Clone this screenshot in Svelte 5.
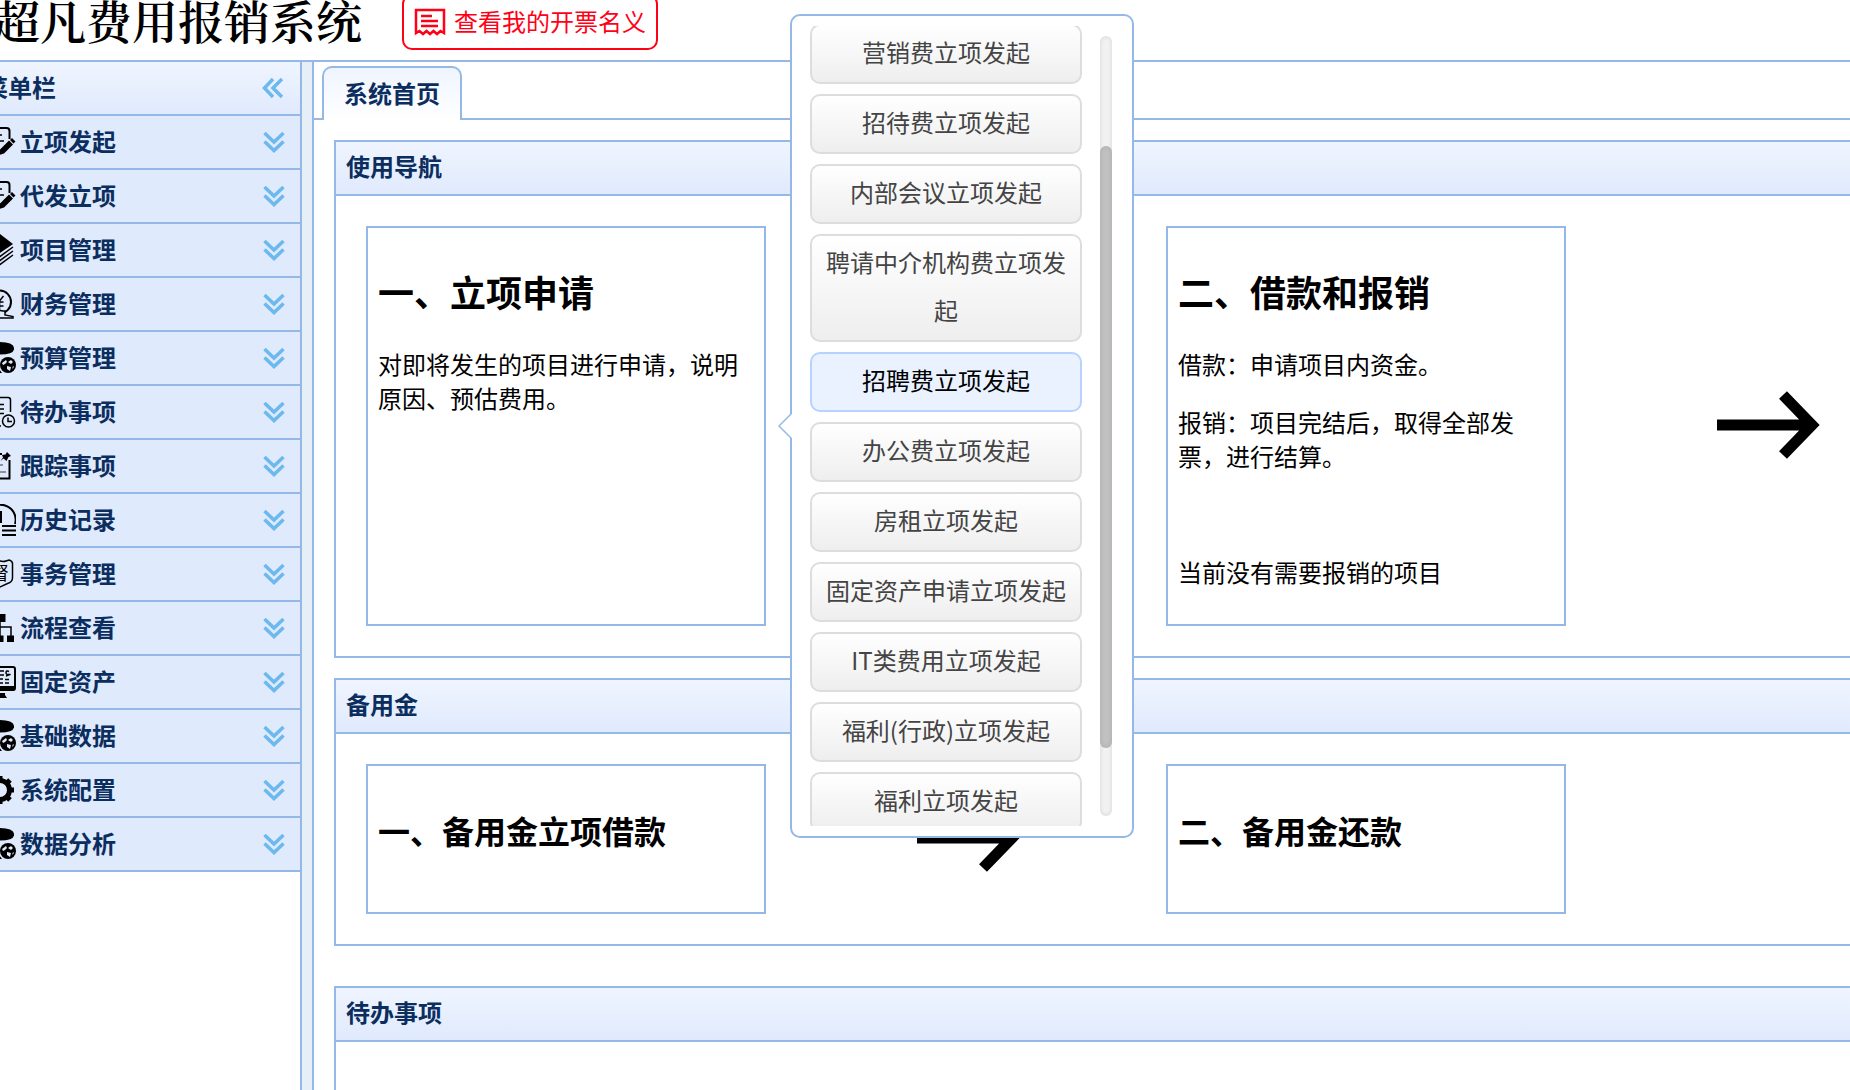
<script>
  const menu = [
    { label: '立项发起', icon: 'edit' },
    { label: '代发立项', icon: 'edit' },
    { label: '项目管理', icon: 'layers' },
    { label: '财务管理', icon: 'finance' },
    { label: '预算管理', icon: 'data' },
    { label: '待办事项', icon: 'todo' },
    { label: '跟踪事项', icon: 'track' },
    { label: '历史记录', icon: 'history' },
    { label: '事务管理', icon: 'shield' },
    { label: '流程查看', icon: 'flow' },
    { label: '固定资产', icon: 'asset' },
    { label: '基础数据', icon: 'data' },
    { label: '系统配置', icon: 'gear' },
    { label: '数据分析', icon: 'data' }
  ];

  const options = [
    '营销费立项发起',
    '招待费立项发起',
    '内部会议立项发起',
    '聘请中介机构费立项发起',
    '招聘费立项发起',
    '办公费立项发起',
    '房租立项发起',
    '固定资产申请立项发起',
    'IT类费用立项发起',
    '福利(行政)立项发起',
    '福利立项发起'
  ];

  let selected = $state('招聘费立项发起');
</script>

{#snippet menuIcon(name)}
  <svg class="menu-icon" viewBox="0 0 32 32" aria-hidden="true">
    {#if name === 'edit'}
      <path d="M25.500 13V5q0-3-3-3H5Q2 2 2 5v22q0 3 3 3h10" class="line" />
      <path d="M8 9h10M8 15h12M8 21h7" class="line thin" />
      <path d="M28 12l3.500 3.500-2 2-3.500-3.500zM25 14.500l4 4L20 27.500l-5 1.500 1-5.500z" />
    {:else if name === 'layers'}
      <path d="M16 0l13 10-13 9-13-9z" />
      <path d="M3 13l13 9.500 13-9.500M3 17l13 9.500 13-9.500M3 21l13 9.500 13-9.500" class="line thin" />
    {:else if name === 'finance'}
      <circle cx="15.500" cy="14" r="11.500" class="line" />
      <path d="M11.500 8l4 5 4-5M15.500 13v9M11.500 14h8M11.500 18h8" class="line thin" />
      <path d="M14 22l5 1 2 0v4l8 1.500V30H14z" class="patch" />
    {:else if name === 'data'}
      <path d="M1 5q1-5 14.500-5T30 5.500v2Q29 12.500 15.500 12.500T1 7.500z" />
      <path d="M1 12q5 4 13 4-2 4 0 8-8 0-13-4zM1 23q5 4 14 4l3 4Q4 31 1 27z" />
      <circle cx="24" cy="23" r="8" />
      <path d="M18 21l4-3 1 2-2 2-2 1zM24 20l3-2 2 2-2 2zM23 24l4 1-1 4-3-2zM29 24l1 1-2 2z" class="cut" />
    {:else if name === 'todo'}
      <path d="M26.500 16V4q0-2.500-2.500-2.500H6Q3.500 1.500 3.500 4v24q0 2 2 2H17" class="line thin" />
      <path d="M9 8.500h11M9 13h11M9 17.500h11M9 22h6" class="line thin" />
      <circle cx="24.500" cy="25" r="6" class="line thin" />
      <path d="M24 21.500v4h4" class="line thin" />
    {:else if name === 'track'}
      <path d="M18 4H4v24.500h21.500V10" class="line" />
      <path d="M8 15h11M8 22h14" class="line pale" />
      <path d="M23 2l4 4-2.500 1-2 4-3-2.500-3 2.500 2.500-3.500-1-2.500 3.500-.5z" />
    {:else if name === 'history'}
      <path d="M31 20A15 15 0 1 0 14 30.500" class="line" />
      <path d="M16 7v10H9" class="line heavy" />
      <path d="M18 22h14M18 26.500h14M18 31h14" class="line" />
    {:else if name === 'shield'}
      <path d="M16 3q3 1 6 0l3-1q4 1 3.500 5v13q0 4-5 5.500L16 29l-7.500-3.500q-5-1.500-5-5.500V7Q3 3 7 2l3 1q3 1 6 0z" class="line thin" />
      <text x="7" y="22" class="seal">督</text>
    {:else if name === 'flow'}
      <path d="M11 2h10.500v8H11zM2.500 23.500h7v6.500h-7zM12.500 23.500h7v6.500h-7zM23 23.500h7v6.500h-7z" />
      <path d="M16 10v14M6 24v-9h21v9" class="line thin" />
    {:else if name === 'asset'}
      <rect x="1" y="1" width="30" height="23" rx="2" class="line" />
      <path d="M1 20h30v3q0 2-2 2H3q-2 0-2-2zM12 27h9v2l2 3H9l2-3z" />
      <path d="M6 5h6M6 9h6M6 13h6M15 5h5M15 9h5M15 13h4M15 17h4M21 17h4M21 13.500h4M25 5.500q-3-1.500-3 1t3 2-3 1.500" class="line thin" />
    {:else if name === 'gear'}
      <circle cx="16" cy="16" r="9.500" class="line ring" />
      <path d="M16 2v5M16 25v5M2 16h5M25 16h5M6 6l4 4M22 22l4 4M26 6l-4 4M10 22l-4 4" class="line ring" />
    {/if}
  </svg>
{/snippet}

{#snippet arrow()}
  <div class="slot" aria-hidden="true">
    <svg class="arrow" viewBox="0 0 104 70">
      <path d="M1 34H95M67 4L96 34 67 64" />
    </svg>
  </div>
{/snippet}

<div class="page">
  <header class="top">
    <h1>超凡费用报销系统</h1>
    <button class="invoice" type="button">
      <svg class="invoice-icon" viewBox="0 0 32 28" aria-hidden="true">
        <path d="M2 25V2h28v23l-3.500-2-3.500 3-3.500-3-3.500 3-3.500-3-3.500 3-3.500-3zM7 8h11M7 13h17M7 18h17" />
      </svg>
      <span>查看我的开票名义</span>
    </button>
  </header>

  <div class="body">
    <nav class="sidebar">
      <div class="menu-title">
        <span>菜单栏</span>
        <button class="tool" type="button" aria-label="收起菜单">
          <svg class="chev" viewBox="0 0 24 24"><path d="M11 3l-8.500 9L11 21M20 3l-9 9 9 9" /></svg>
        </button>
      </div>
      {#each menu as item}
        <button class="menu-item" type="button">
          {@render menuIcon(item.icon)}
          <span>{item.label}</span>
          <svg class="chev" viewBox="0 0 24 24" aria-hidden="true">
            <path d="M2.500 3l9.500 9 9.500-9M2.500 11.500l9.500 9 9.500-9" />
          </svg>
        </button>
      {/each}
    </nav>

    <div class="splitter"></div>

    <main>
      <div class="tabs">
        <button class="tab" type="button">系统首页</button>
      </div>
      <div class="content">
        <section class="panel">
          <h2>使用导航</h2>
          <div class="flow">
            <article class="card">
              <h3>一、立项申请</h3>
              <p>对即将发生的项目进行申请，说明原因、预估费用。</p>
            </article>
            {@render arrow()}
            <article class="card">
              <h3>二、借款和报销</h3>
              <p>借款：申请项目内资金。</p>
              <p>报销：项目完结后，取得全部发票，进行结算。</p>
              <p class="status">当前没有需要报销的项目</p>
            </article>
            {@render arrow()}
          </div>
        </section>

        <section class="panel">
          <h2>备用金</h2>
          <div class="flow">
            <article class="card short"><h3>一、备用金立项借款</h3></article>
            {@render arrow()}
            <article class="card short"><h3>二、备用金还款</h3></article>
          </div>
        </section>

        <section class="panel last">
          <h2>待办事项</h2>
        </section>
      </div>
    </main>
  </div>
</div>

<div class="popup">
  <svg class="pointer" viewBox="0 0 14 28" aria-hidden="true"><path d="M14 1L1 14l13 13" /></svg>
  <div class="options">
    <div class="options-inner">
      {#each options as option}
        <button
          type="button"
          class="option"
          class:active={option === selected}
          onclick={() => (selected = option)}>{option}</button>
      {/each}
    </div>
  </div>
  <div class="track"><div class="thumb"></div></div>
</div>

<style>
  :global(body) {
    margin: 0;
    overflow: hidden;
    background: #fff;
  }
  * {
    box-sizing: border-box;
  }
  .page,
  .popup {
    font-family: 'Noto Sans CJK SC', sans-serif;
    font-size: 24px;
    line-height: 34px;
    color: #000;
  }
  /* The view is scrolled slightly to the right and down */
  .page {
    display: flex;
    flex-direction: column;
    min-height: calc(100vh + 16px);
    margin: -16px 0 0 -20px;
  }
  button {
    font: inherit;
    cursor: pointer;
  }
  h1,
  h2,
  h3,
  p {
    margin: 0;
  }
  .top {
    display: flex;
    align-items: center;
    gap: 40px;
    height: 78px;
    padding-left: 14px;
    border-bottom: 2px solid #95b8e7;
  }
  h1 {
    padding-bottom: 6px;
    font-family: 'Noto Serif CJK SC', 'Songti SC', serif;
    font-size: 46px;
    line-height: 56px;
    font-weight: 600;
    white-space: nowrap;
  }
  .invoice {
    display: flex;
    align-items: center;
    gap: 8px;
    height: 56px;
    padding: 0 10px;
    border: 2px solid #ff0016;
    border-radius: 10px;
    background: #fff;
    color: #ff0016;
  }
  .invoice span {
    padding-bottom: 3px;
  }
  .invoice-icon {
    width: 32px;
    height: 28px;
    fill: none;
    stroke: currentColor;
    stroke-width: 2.5;
  }
  .body {
    display: flex;
    flex: 1;
  }
  .sidebar {
    flex: none;
    width: 322px;
    border-right: 2px solid #95b8e7;
  }
  .menu-title,
  .menu-item {
    display: flex;
    align-items: center;
    width: 100%;
    height: 54px;
    padding: 0 14px 0 4px;
    border: 0;
    border-bottom: 2px solid #95b8e7;
    background: #e0eafd;
    color: #0b2e5f;
    font-weight: 700;
    text-align: left;
  }
  .menu-title {
    justify-content: space-between;
    background: linear-gradient(#eff5ff, #e0eafd);
  }
  .menu-title span,
  .menu-item span {
    padding-bottom: 3px;
  }
  .menu-item span {
    flex: 1;
    padding-left: 4px;
  }
  .tool {
    display: flex;
    padding: 0;
    border: 0;
    background: none;
  }
  .chev {
    width: 24px;
    height: 24px;
    fill: none;
    stroke: #6cb9ee;
    stroke-width: 3.5;
  }
  .menu-icon {
    width: 32px;
    height: 32px;
    fill: #000;
  }
  .line {
    fill: none;
    stroke: #000;
    stroke-width: 2;
  }
  .thin {
    stroke-width: 1.5;
  }
  .pale {
    stroke: #777;
    stroke-width: 1.5;
  }
  .heavy {
    stroke-width: 4;
  }
  .ring {
    stroke-width: 5;
  }
  .patch {
    fill: #e0eafd;
    stroke: #000;
    stroke-width: 1.5;
  }
  .cut {
    fill: #e0eafd;
  }
  .seal {
    font-size: 18px;
    font-weight: 400;
  }
  .splitter {
    flex: none;
    width: 12px;
    border-right: 2px solid #95b8e7;
    background: #e6eef8;
  }
  main {
    display: flex;
    flex: 1;
    flex-direction: column;
    min-width: 0;
  }
  .tabs {
    display: flex;
    height: 58px;
    padding: 4px 8px 0;
    background: linear-gradient(#95b8e7, #95b8e7) bottom / 100% 2px no-repeat;
  }
  .tab {
    padding: 0 20px 3px;
    border: 2px solid #95b8e7;
    border-bottom: 0;
    border-radius: 10px 10px 0 0;
    background: linear-gradient(#eff5ff, #fff);
    color: #0b2e5f;
    font-weight: 700;
  }
  .content {
    display: flex;
    flex: 1;
    flex-direction: column;
    gap: 20px;
    padding: 20px 0 0 20px;
  }
  .panel {
    border: 2px solid #95b8e7;
    border-right: 0;
  }
  .last {
    flex: 1;
    margin-top: 20px;
    border-bottom: 0;
  }
  h2 {
    padding: 7px 10px 11px;
    border-bottom: 2px solid #95b8e7;
    background: linear-gradient(#eff5ff, #e0eafd);
    color: #0b2e5f;
    font-size: 24px;
    line-height: 34px;
  }
  .flow {
    display: flex;
    padding: 30px;
    overflow: hidden;
  }
  .card {
    flex: none;
    width: 400px;
    min-height: 400px;
    padding: 38px 10px 0;
    border: 2px solid #95b8e7;
  }
  .short {
    min-height: 150px;
  }
  h3 {
    margin-bottom: 31px;
    font-size: 36px;
    line-height: 50px;
  }
  .short h3 {
    margin: 0;
    font-size: 32px;
    line-height: 52px;
  }
  p + p {
    margin-top: 24px;
  }
  p + .status {
    margin-top: 82px;
  }
  .slot {
    display: flex;
    flex: none;
    align-items: center;
    justify-content: center;
    width: 400px;
    padding-left: 4px;
  }
  .arrow {
    width: 104px;
    height: 70px;
    fill: none;
    stroke: #000;
    stroke-width: 11;
  }
  .popup {
    position: absolute;
    top: 14px;
    left: 790px;
    display: flex;
    gap: 18px;
    width: 344px;
    padding: 10px 20px 10px 18px;
    border: 2px solid #95b8e7;
    border-radius: 10px;
    background: #fff;
  }
  .pointer {
    position: absolute;
    top: 396px;
    left: -14px;
    width: 14px;
    height: 28px;
    fill: #fff;
    stroke: #95b8e7;
    stroke-width: 1.5;
  }
  .options {
    flex: 1;
    height: 800px;
    overflow: hidden;
  }
  .options-inner {
    display: flex;
    flex-direction: column;
    gap: 10px;
    margin-top: -2px;
  }
  .option {
    padding: 2px 14px 6px;
    border: 2px solid #ddd;
    border-radius: 10px;
    background: linear-gradient(#fff, #eee);
    color: #444;
    line-height: 48px;
  }
  .option.active {
    border-color: #b7d2ff;
    background: #eaf2ff;
    color: #000;
  }
  .track {
    width: 12px;
    margin: 10px 0;
    padding-top: 110px;
    border-radius: 6px;
    background: #f2f2f2;
    box-shadow: inset 0 0 5px rgba(0, 0, 0, 0.12);
  }
  .thumb {
    height: 602px;
    border-radius: 6px;
    background: #c1c1c1;
    box-shadow: inset 0 0 5px rgba(0, 0, 0, 0.12);
  }
</style>
